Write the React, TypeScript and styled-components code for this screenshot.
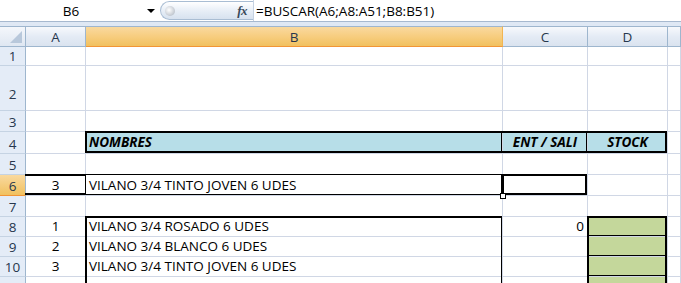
import React from "react";
import styled, { createGlobalStyle, css } from "styled-components";

const GRID = "#d0d7e5";
const HEAD_LINE = "#9eb6ce";

const GlobalStyle = createGlobalStyle`
  html, body { margin: 0; padding: 0; background: #fff; overflow: hidden; }
  body { font-family: "Open Sans", "Liberation Sans", sans-serif; }
`;

// formula bar on top
const Bar = styled.div`
  display: flex;
  align-items: stretch;
  height: 21px;
  border-bottom: 1px solid #a7b9cf;
  background: #fff;
`;

const NameBox = styled.div`
  width: 142px;
  display: flex;
  align-items: center;
  justify-content: center;
  font-size: 13.5px;
  color: #000;
`;

const DropArrow = styled.div`
  width: 18px;
  display: flex;
  align-items: center;
  justify-content: center;
  &::before {
    content: "";
    border-left: 4px solid transparent;
    border-right: 4px solid transparent;
    border-top: 4px solid #000;
  }
`;

const Pill = styled.div`
  position: relative;
  width: 86px;
  margin: 1px 0;
  border: 1px solid #a9bdd3;
  border-right: none;
  border-radius: 11px 0 0 11px;
  background: linear-gradient(#ffffff, #e6edf6 55%, #d7e2ef);
  display: flex;
  align-items: center;
  justify-content: flex-end;
  padding-right: 6px;
`;

const Knob = styled.div`
  position: absolute;
  left: 4px;
  top: 4px;
  width: 10px;
  height: 10px;
  border-radius: 50%;
  background: radial-gradient(circle at 40% 40%, #fff, #c2c8d0 70%, #a8b0ba);
`;

const Fx = styled.span`
  font-family: "Liberation Serif", serif;
  font-style: italic;
  font-weight: bold;
  font-size: 13px;
  color: #3a4a5c;
  letter-spacing: -0.5px;
`;

const Formula = styled.div`
  flex: 1;
  border-left: 1px solid #c5d2e2;
  padding-left: 2px;
  display: flex;
  align-items: center;
  font-size: 13.5px;
  color: #000;
`;

const Strip = styled.div`
  height: 4px;
  background: #dfe8f4;
`;

// the sheet
const Sheet = styled.div`
  display: grid;
  grid-template-columns: 26px 60px 417px 85px 80px 1fr;
  grid-template-rows: 21px 19px 45px 21px 22px 21px 21px 21px 20px 20px 20px 20px;
`;

const Corner = styled.div`
  position: relative;
  background: linear-gradient(#f4f7fb, #dfe7f2);
  border-top: 1px solid ${HEAD_LINE};
  border-right: 1px solid ${HEAD_LINE};
  border-bottom: 1px solid ${HEAD_LINE};
  box-sizing: border-box;
`;

const CornerMark = styled.svg`
  position: absolute;
  right: 3px;
  bottom: 3px;
`;

const ColHead = styled.div<{ $sel?: boolean }>`
  display: flex;
  align-items: center;
  justify-content: center;
  box-sizing: border-box;
  border-top: 1px solid ${HEAD_LINE};
  border-right: 1px solid ${(p) => (p.$sel ? "#f2b552" : HEAD_LINE)};
  border-bottom: 1px solid ${(p) => (p.$sel ? "#f29536" : HEAD_LINE)};
  background: ${(p) =>
    p.$sel
      ? "linear-gradient(#f9d99f, #f7cd7f 50%, #f1c15f)"
      : "linear-gradient(#f7f9fc, #e4ebf5 50%, #dae3ef)"};
  font-size: 13.5px;
  color: #27374d;
  padding-top: 1px;
`;

const RowHead = styled.div<{ $sel?: boolean; $pb?: number }>`
  display: flex;
  align-items: flex-end;
  justify-content: center;
  box-sizing: border-box;
  padding-bottom: ${(p) => p.$pb ?? 1}px;
  border-right: 1px solid ${HEAD_LINE};
  border-bottom: 1px solid ${(p) => (p.$sel ? "#f29536" : "#c5d3e3")};
  background: ${(p) =>
    p.$sel ? "linear-gradient(#f9d99f, #f1c15f)" : "#e4ecf7"};
  font-size: 13.5px;
  line-height: 16px;
  color: #27374d;
`;

type Edges = { t?: number; r?: number; b?: number; l?: number };

const Cell = styled.div<{
  $bg?: string;
  $align?: string;
  $head?: boolean;
  $edges?: Edges;
}>`
  position: relative;
  display: flex;
  align-items: flex-end;
  justify-content: ${(p) => p.$align ?? "flex-start"};
  box-sizing: border-box;
  padding: 0 3px 2px 3px;
  border-right: 1px solid ${GRID};
  border-bottom: 1px solid ${GRID};
  background: ${(p) => p.$bg ?? "#fff"};
  font-size: 13.5px;
  line-height: 16px;
  color: #000;
  white-space: nowrap;
  ${(p) =>
    p.$head &&
    css`
      font-weight: bold;
      font-style: italic;
      padding-bottom: 3px;
    `}
  ${(p) =>
    p.$edges &&
    css`
      &::after {
        content: "";
        position: absolute;
        top: -1px;
        left: -1px;
        right: 0;
        bottom: 0;
        box-sizing: border-box;
        border-style: solid;
        border-color: #000;
        border-width: ${p.$edges.t ?? 0}px ${p.$edges.r ?? 0}px
          ${p.$edges.b ?? 0}px ${p.$edges.l ?? 0}px;
        pointer-events: none;
      }
    `}
`;

const FillHandle = styled.div`
  position: absolute;
  right: -4px;
  bottom: -4px;
  width: 4px;
  height: 4px;
  border: 1px solid #000;
  background: #fff;
  z-index: 2;
`;

type CellData = {
  text?: string;
  align?: string;
  bg?: string;
  head?: boolean;
  edges?: Edges;
  handle?: boolean;
};

type RowData = { n?: number; sel?: boolean; pb?: number; cells: CellData[] };

const GREEN = "#c4d79b";
const BLUE = "#b7dee8";

const rows: RowData[] = [
  { n: 1, cells: [{}, {}, {}, {}, {}] },
  { n: 2, pb: 8, cells: [{}, {}, {}, {}, {}] },
  { n: 3, cells: [{}, {}, {}, {}, {}] },
  {
    n: 4,
    cells: [
      {},
      { text: "NOMBRES", bg: BLUE, head: true, edges: { t: 2, b: 2, l: 2, r: 1 } },
      { text: "ENT / SALI", bg: BLUE, head: true, align: "center", edges: { t: 2, b: 2, r: 1 } },
      { text: "STOCK", bg: BLUE, head: true, align: "center", edges: { t: 2, b: 2, r: 2 } },
      {},
    ],
  },
  { n: 5, cells: [{}, {}, {}, {}, {}] },
  {
    n: 6,
    sel: true,
    cells: [
      { text: "3", align: "center", edges: { t: 2, b: 2 } },
      { text: "VILANO 3/4 TINTO JOVEN 6 UDES", edges: { t: 1, r: 1, b: 1, l: 1 }, handle: true },
      { edges: { t: 2, r: 2, b: 2, l: 2 } },
      {},
      {},
    ],
  },
  { n: 7, cells: [{}, {}, {}, {}, {}] },
  {
    n: 8,
    cells: [
      { text: "1", align: "center" },
      { text: "VILANO 3/4 ROSADO 6 UDES", edges: { t: 2, l: 2, r: 1 } },
      { text: "0", align: "flex-end" },
      { bg: GREEN, edges: { t: 2, l: 2, r: 2, b: 1 } },
      {},
    ],
  },
  {
    n: 9,
    cells: [
      { text: "2", align: "center" },
      { text: "VILANO 3/4 BLANCO 6 UDES", edges: { l: 2, r: 1 } },
      {},
      { bg: GREEN, edges: { l: 2, r: 2, b: 1 } },
      {},
    ],
  },
  {
    n: 10,
    cells: [
      { text: "3", align: "center" },
      { text: "VILANO 3/4 TINTO JOVEN 6 UDES", edges: { l: 2, r: 1 } },
      {},
      { bg: GREEN, edges: { l: 2, r: 2, b: 1 } },
      {},
    ],
  },
  {
    // row 11 only shows its top edge in the window
    cells: [
      {},
      { edges: { l: 2, r: 1 } },
      {},
      { bg: GREEN, edges: { l: 2, r: 2, b: 1 } },
      {},
    ],
  },
];

const columns = ["A", "B", "C", "D", ""];

export default function App() {
  return (
    <>
      <GlobalStyle />
      <Bar>
        <NameBox>B6</NameBox>
        <DropArrow />
        <Pill>
          <Knob />
          <Fx>fx</Fx>
        </Pill>
        <Formula>=BUSCAR(A6;A8:A51;B8:B51)</Formula>
      </Bar>
      <Strip />
      <Sheet>
        <Corner>
          <CornerMark width="12" height="12" viewBox="0 0 12 12">
            <polygon points="12,0 12,12 0,12" fill="#b8c8db" />
          </CornerMark>
        </Corner>
        {columns.map((c) => (
          <ColHead key={c || "E"} $sel={c === "B"}>
            {c}
          </ColHead>
        ))}
        {rows.map((r, ri) => (
          <React.Fragment key={ri}>
            <RowHead $sel={r.sel} $pb={r.pb}>
              {r.n}
            </RowHead>
            {r.cells.map((c, i) => (
              <Cell
                key={i}
                $bg={c.bg}
                $align={c.align}
                $head={c.head}
                $edges={c.edges}
              >
                {c.text}
                {c.handle && <FillHandle />}
              </Cell>
            ))}
          </React.Fragment>
        ))}
      </Sheet>
    </>
  );
}
